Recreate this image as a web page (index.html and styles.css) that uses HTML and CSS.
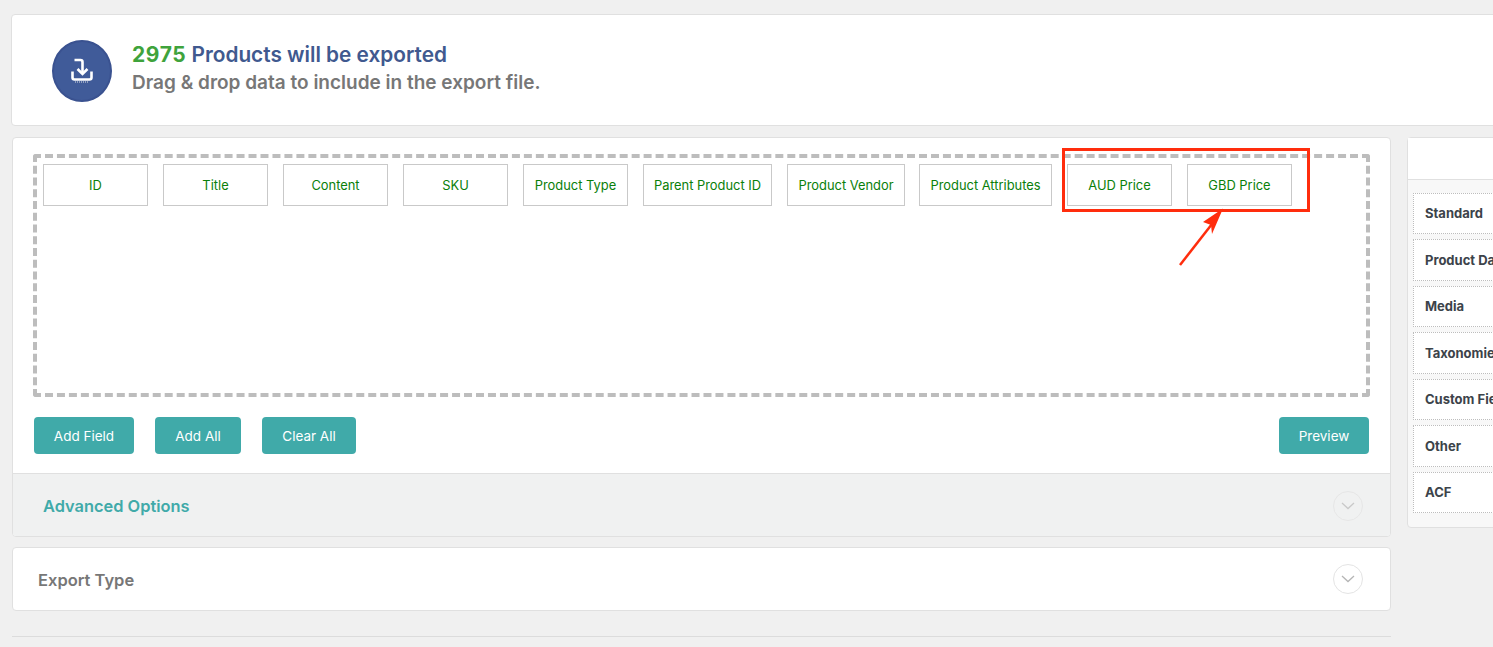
FILE: index.html
```html
<!DOCTYPE html>
<html lang="en">
<head>
<meta charset="utf-8">
<title>Export Products</title>
<link rel="stylesheet" href="styles.css">
</head>
<body>
<div class="page">
  <header class="hero">
    <div class="hero-icon">
      <svg width="22" height="26" viewBox="0 0 22 26" fill="none" stroke="#fff" stroke-width="2.600">
        <path d="M3.500 2h6q2 0 2 2V15.500"/>
        <path d="M6.500 11l5 5 5-5"/>
        <path d="M1.500 13.500v6q0 2 2 2h15q2 0 2-2v-6"/>
        <path d="M4 24h14" stroke="#aab6cc" stroke-width="1.500" stroke-dasharray="1 1"/>
      </svg>
    </div>
    <div class="hero-text">
      <h1 class="hero-title"><span class="count">2975</span> Products will be exported</h1>
      <p class="hero-sub">Drag &amp; drop data to include in the export file.</p>
    </div>
  </header>
  <div class="columns">
    <main class="main-col">
      <section class="builder">
        <div class="builder-body">
          <div class="dropzone">
            <div class="chip">ID</div>
            <div class="chip">Title</div>
            <div class="chip">Content</div>
            <div class="chip">SKU</div>
            <div class="chip">Product Type</div>
            <div class="chip chip-parent">Parent Product ID</div>
            <div class="chip chip-vendor">Product Vendor</div>
            <div class="chip chip-attr">Product Attributes</div>
            <div class="chip">AUD Price</div>
            <div class="chip">GBD Price</div>
          </div>
          <div class="actions">
            <button class="btn btn-field">Add Field</button>
            <button class="btn btn-all">Add All</button>
            <button class="btn btn-clear">Clear All</button>
            <button class="btn btn-preview">Preview</button>
          </div>
        </div>
        <div class="advanced">
          <span class="advanced-title">Advanced Options</span>
          <span class="chevron chevron-faint">
            <svg width="14" height="8" viewBox="0 0 14 8" fill="none" stroke="#c9c9c9" stroke-width="1.300"><path d="M1 1l6 5.500 6-5.500"/></svg>
          </span>
        </div>
      </section>
      <section class="export-type">
        <span class="export-title">Export Type</span>
        <span class="chevron">
          <svg width="14" height="8" viewBox="0 0 14 8" fill="none" stroke="#b5b5b5" stroke-width="1.300"><path d="M1 1l6 5.500 6-5.500"/></svg>
        </span>
      </section>
      <hr class="rule">
    </main>
    <aside class="side">
      <div class="side-head"></div>
      <ul class="side-list">
        <li class="side-item">Standard</li>
        <li class="side-item">Product Data</li>
        <li class="side-item">Media</li>
        <li class="side-item">Taxonomies</li>
        <li class="side-item">Custom Fields</li>
        <li class="side-item">Other</li>
        <li class="side-item">ACF</li>
      </ul>
    </aside>
  </div>
  <div class="callout"></div>
  <svg class="arrow" width="60" height="70" viewBox="0 0 60 70">
    <path d="M1 58L33 17" stroke="#ff2d0d" stroke-width="2.500" fill="none"/>
    <path d="M44 1.500L24 15l8 3 1 9z" fill="#ff2d0d"/>
  </svg>
</div>
</body>
</html>
```
FILE: styles.css
```css
* { box-sizing: border-box; }
html, body { margin: 0; padding: 0; height: 100%; overflow: hidden; }
body { background: #f0f0f0; font-family: Inter, "Liberation Sans", sans-serif; }
.page { position: relative; width: 1493px; height: 647px; overflow: hidden; padding: 14px 0 0 11px; }

.hero {
  display: flex; align-items: center; gap: 20px;
  width: 1500px; height: 112px; padding: 0 0 0 40px;
  background: #fff; border: 1px solid #e0e0e0; border-radius: 4px;
}
.hero-icon {
  width: 60px; height: 62px; border-radius: 50%; flex: none; margin-top: 2px;
  background: #405b99; border: 2px solid #3a5290;
  display: flex; align-items: center; justify-content: center;
}
.hero-text { padding-bottom: 3px; }
.hero-title { margin: 0; font-size: 20.800px; line-height: 28px; font-weight: 600; color: #40598f; }
.count { color: #3fa33c; font-size: 21px; font-weight: 700; letter-spacing: 0.6px; }
.hero-sub { margin: 0; font-size: 19px; line-height: 28px; font-weight: 600; color: #777; }

.columns { display: flex; align-items: flex-start; gap: 16px; margin: 11px 0 0 1px; }
.main-col { width: 1379px; flex: none; }

.builder { background: #fff; border: 1px solid #e0e0e0; border-radius: 4px; overflow: hidden; height: 400px; }
.builder-body { padding: 16px 20px 0 20px; height: 335px; }
.dropzone {
  height: 243px; border: 4px dashed #bdbdbd; border-radius: 3px;
  padding: 6px 0 0 6px; display: flex; align-items: flex-start; gap: 15px;
}
.chip {
  width: 105px; height: 42px; flex: none;
  display: flex; align-items: center; justify-content: center;
  background: #fff; border: 1px solid #c9c9c9;
  font-size: 12.900px; color: #0a800a; white-space: nowrap;
}
.chip-parent { width: 129px; }
.chip-vendor { width: 118px; margin-right: -1px; }
.chip-attr { width: 133px; }

.actions { display: flex; gap: 21px; margin: 20px 1px 0 1px; }
.btn {
  height: 37px; border: 0; border-radius: 4px; background: #40aaa9; color: #fff;
  font: 400 13.500px Inter, "Liberation Sans", sans-serif;
}
.btn-field { width: 100px; }
.btn-all { width: 86px; }
.btn-clear { width: 94px; }
.btn-preview { width: 90px; margin-left: auto; }

.advanced {
  display: flex; align-items: center; justify-content: space-between;
  height: 64px; padding: 0 27px 0 30px;
  background: #f0f1f1; border-top: 1px solid #e0e0e0;
}
.advanced-title { font-size: 16.400px; font-weight: 600; color: #40aaa9; }

.chevron {
  width: 30px; height: 30px; border-radius: 50%; border: 1px solid #e4e4e4;
  display: flex; align-items: center; justify-content: center;
}
.chevron-faint { border-color: #e6e6e6; }

.export-type {
  display: flex; align-items: center; justify-content: space-between;
  height: 64px; margin-top: 10px; padding: 0 27px 0 25px;
  background: #fff; border: 1px solid #e0e0e0; border-radius: 4px;
}
.export-title { font-size: 16.500px; font-weight: 600; color: #777; padding-top: 1px; }
.rule { border: 0; border-top: 1px solid #dcdcdc; margin: 25px 0 0; }

.side {
  width: 200px; flex: none; height: 391px;
  background: #f8f8f8; border: 1px solid #e0e0e0; border-radius: 4px;
}
.side-head { height: 42px; background: #fff; border-bottom: 1px solid #e0e0e0; }
.side-list { list-style: none; margin: 12.500px 0 0; padding: 0 0 0 5px; display: flex; flex-direction: column; gap: 5px; }
.side-item {
  height: 41.500px; display: flex; align-items: center; padding-left: 11px;
  background: #fff; border: 1px dotted #bdbdbd;
  font-size: 13px; font-weight: 700; color: #3c434a; white-space: nowrap;
}

.callout { position: absolute; left: 1062px; top: 148px; width: 248px; height: 64px; border: 3px solid #ff2d0d; }
.arrow { position: absolute; left: 1179px; top: 207px; }
```
